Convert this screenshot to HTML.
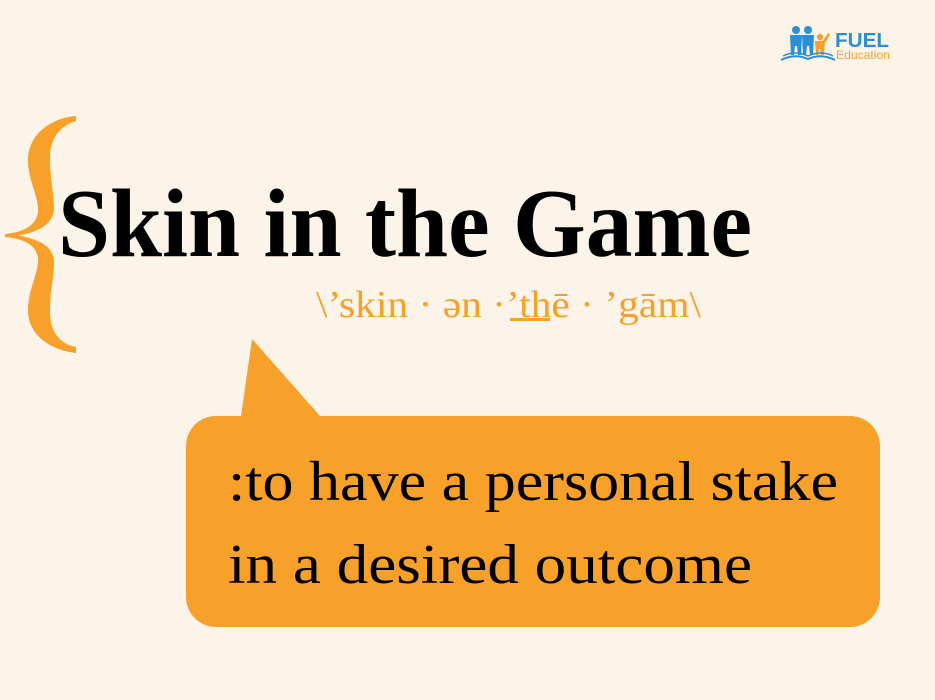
<!DOCTYPE html>
<html><head><meta charset="utf-8"><style>
html,body{margin:0;padding:0;background:#fdf4e9;}
svg{display:block}
</style></head><body>
<svg width="935" height="700" viewBox="0 0 935 700" xmlns="http://www.w3.org/2000/svg">
<rect width="935" height="700" fill="#fdf4e9"/>
<!-- logo -->
<g>
  <circle cx="796" cy="30" r="4" fill="#2a8fd8"/>
  <circle cx="808" cy="30" r="4" fill="#2a8fd8"/>
  <circle cx="820" cy="37" r="3.2" fill="#f7a12a"/>
  <path d="M790 35 h12 l-1 20 h-3 l-1 -9 h-2 l-1 9 h-3 z" fill="#2a8fd8"/>
  <path d="M802 35 h12 l-1 20 h-3 l-1 -9 h-2 l-1 9 h-3 z" fill="#2a8fd8"/>
  <path d="M815 41 h10 l-1 14 h-3 l-1 -6 h-1 l-1 6 h-2 z M823 41 l5 -8 l2 1 l-4 8 z" fill="#f7a12a"/>
  <path d="M781 60 Q795 53 808 59 Q821 53 835 60" fill="none" stroke="#2a8fd8" stroke-width="2"/>
  <path d="M783 56 Q795 50 808 56 Q821 50 833 56" fill="none" stroke="#2a8fd8" stroke-width="1.5"/>
  <text x="835" y="47" font-family="Liberation Sans, sans-serif" font-weight="bold" font-size="20" fill="#2a8fd8" textLength="54" lengthAdjust="spacingAndGlyphs">FUEL</text>
  <text x="836" y="59" font-family="Liberation Sans, sans-serif" font-size="12" fill="#f7a12a" textLength="54" lengthAdjust="spacingAndGlyphs">Education</text>
</g>
<!-- brace -->
<path fill="#f7a12a" d="M76,116 C50,118 28,135 28,160 C28,180 38,195 38,210 C38,222 28,232 5,234 L5,237 C28,239 38,248 38,260 C38,275 28,290 28,310 C28,335 50,350 76,353 L76,347 C60,344 50,332 50,312 C50,290 54,278 54,262 C54,250 45,240 18,235.5 C45,231 54,220 54,208 C54,192 50,180 50,158 C50,138 60,126 76,121 Z"/>
<!-- title -->
<text x="58" y="256" font-family="Liberation Serif, serif" font-weight="bold" font-size="98" fill="#000" textLength="694" lengthAdjust="spacingAndGlyphs">Skin in the Game</text>
<!-- pronunciation -->
<text x="316" y="317" font-family="Liberation Serif, serif" font-size="38" fill="#f7a12a" textLength="385" lengthAdjust="spacingAndGlyphs">\’skin · ən ·’thē · ’gām\</text>
<rect x="510" y="318" width="40" height="3" fill="#f7a12a"/>
<!-- bubble -->
<polygon points="241,416 252,339 320,416" fill="#f7a12a"/>
<rect x="186" y="416" width="694" height="211" rx="30" fill="#f7a12a"/>
<text x="228" y="500" font-family="Liberation Serif, serif" font-size="56" fill="#000" textLength="610" lengthAdjust="spacingAndGlyphs">:to have a personal stake</text>
<text x="228" y="583" font-family="Liberation Serif, serif" font-size="56" fill="#000" textLength="524" lengthAdjust="spacingAndGlyphs">in a desired outcome</text>
</svg>
</body></html>
